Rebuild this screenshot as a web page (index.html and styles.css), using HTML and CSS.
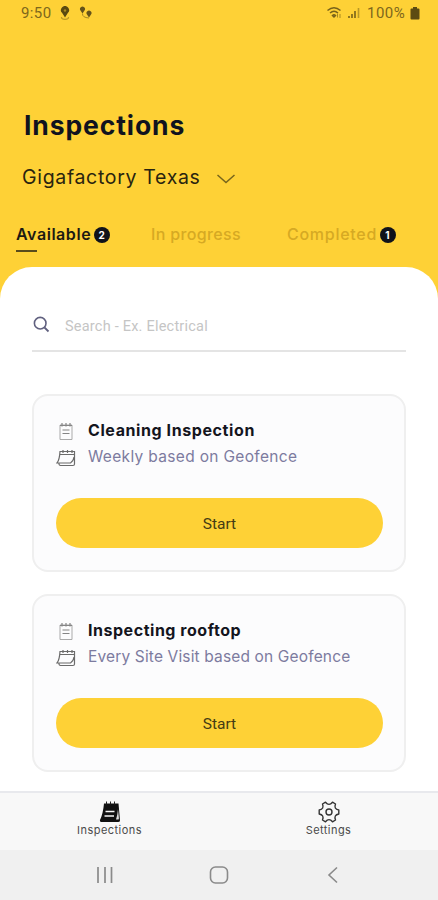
FILE: index.html
```html
<!DOCTYPE html>
<html lang="en">
<head>
<meta charset="utf-8">
<title>Inspections</title>
<link rel="stylesheet" href="styles.css">
</head>
<body>
<svg width="0" height="0" class="defs" aria-hidden="true">
  <symbol id="note" viewBox="0 0 18 20">
    <path d="M3 3h12v14.500H3z" fill="none" stroke="#aaa"/>
    <path d="M3 3.500h12M5 1v3.500M9 1v3.500M13 1v3.500M5.500 8h7M5.500 11.500h7" fill="none" stroke="currentColor" stroke-width="1.200"/>
  </symbol>
  <symbol id="calendar" viewBox="0 0 20 18">
    <path d="M4 2.500H18.500V15Q18.500 16.500 17 16.500H4.500Q3 16.500 2.800 14H1Q3.500 11 4 2.500zM4 5.500h14.500M7 1v3M11.500 1v3M16 1v3M2 14h12.500Q17.500 12 18 8" fill="none" stroke="currentColor" stroke-width="1.200"/>
  </symbol>
</svg>
<div class="phone">
  <header class="header">
    <div class="status">
      <span class="time">9:50</span>
      <svg class="pin" width="12" height="15" viewBox="0 0 12 15"><path d="M6 11.500L3.200 7A4 4 0 1 1 8.800 7z" fill="#5a4a10"/><circle cx="6" cy="4.500" r="1.200" fill="#a88a20"/><path d="M3 11Q1 13 6 13.300Q11 13 9 11" fill="none" stroke="#a88a20"/></svg>
      <svg class="route" width="14" height="14" viewBox="0 0 14 14"><path d="M3.500 7.500L1.500 4.500A2.500 2.500 0 1 1 5.500 4.500zM10 11.500L8 8.500A2.500 2.500 0 1 1 12 8.500z" fill="#65531a"/><path d="M3.500 7.500Q3 11.500 10 12" fill="none" stroke="#a88a20"/></svg>
      <span class="spacer"></span>
      <svg class="wifi" width="17" height="14" viewBox="0 0 17 14"><path d="M1.500 4.500Q8 -1 14.500 4.500M4 7Q8 3.500 12 7M6.500 9.500Q8 8 9.500 9.500L8 11z" fill="none" stroke="#77621a" stroke-width="1.500"/><path d="M11.500 7.500v4M14 8v4" stroke="#a88a20"/></svg>
      <svg class="signal" width="14" height="12" viewBox="0 0 14 12"><path d="M2 11V9M5 11V7M8 11V4" stroke="#77621a" stroke-width="1.600"/><path d="M11.500 11V1" stroke="#b89824" stroke-width="1.600"/></svg>
      <span class="percent">100%</span>
      <svg class="battery" width="10" height="13" viewBox="0 0 10 13"><path d="M3 0h4v1.500h1.500q1 0 1 1v9q0 1-1 1h-7q-1 0-1-1v-9q0-1 1-1H3z" fill="#5c4b12"/></svg>
    </div>
    <h1 class="title">Inspections</h1>
    <div class="location"><span>Gigafactory Texas</span><svg width="20" height="12" viewBox="0 0 20 12"><path d="M1.500 2L10 9.500L18.500 2" fill="none" stroke="#77651c" stroke-width="1.500"/></svg></div>
    <nav class="tabs">
      <div class="tab active"><span class="t-available">Available</span><b class="count">2</b></div>
      <div class="tab progress"><span class="t-progress">In progress</span></div>
      <div class="tab completed"><span class="t-completed">Completed</span><b class="count">1</b></div>
    </nav>
  </header>
  <main class="sheet">
    <div class="search"><svg width="17" height="17" viewBox="0 0 17 17"><circle cx="7.200" cy="7.200" r="5.800" fill="none" stroke="#60607f" stroke-width="1.600"/><path d="M11.500 11.500L15.500 15.500" stroke="#60607f" stroke-width="1.800"/></svg><span>Search - Ex. Electrical</span></div>
    <section class="card">
      <div class="row name"><svg class="note" width="18" height="20"><use href="#note"/></svg><span class="n-clean">Cleaning Inspection</span></div>
      <div class="row detail"><svg class="calendar" width="20" height="18"><use href="#calendar"/></svg><span class="d-weekly">Weekly based on Geofence</span></div>
      <button class="start">Start</button>
    </section>
    <section class="card">
      <div class="row name"><svg class="note" width="18" height="20"><use href="#note"/></svg><span class="n-roof">Inspecting rooftop</span></div>
      <div class="row detail"><svg class="calendar" width="20" height="18"><use href="#calendar"/></svg><span class="d-visit">Every Site Visit based on Geofence</span></div>
      <button class="start">Start</button>
    </section>
  </main>
  <nav class="bottom">
    <div class="item"><svg width="24" height="22" viewBox="0 0 24 22"><path d="M6 2.500H20.500L22 19.500Q22 21 20 21H4Q1.500 21 2 19Q5 13 6 2.500z" fill="#111"/><path d="M8.500 .5v3M12.500 .5v3M16.500 .5v3" stroke="#222"/><path d="M7.500 10.500h9M6.500 15h9.500" stroke="#f8f8f8" stroke-width="1.500"/><path d="M20 8Q19.500 14 18 18.500H20.300Q21 18.500 20.900 17z" fill="#ddd"/></svg><span>Inspections</span></div>
    <div class="item"><svg width="24" height="22" viewBox="0 0 24 22"><path d="M8.500 1.200Q12 5.500 15.500 1.200L18.500 3Q16.500 8 21.800 9V13Q16.500 14 18.500 19L15.500 20.800Q12 16.500 8.500 20.800L5.500 19Q7.500 14 2.200 13V9Q7.500 8 5.500 3z" fill="none" stroke="#333" stroke-width="1.400" stroke-linejoin="round"/><circle cx="12" cy="11" r="3" fill="none" stroke="#333" stroke-width="1.400"/></svg><span class="t-settings">Settings</span></div>
  </nav>
  <div class="system">
    <svg width="20" height="18" viewBox="0 0 20 18"><path d="M3 1v16M10 1v16M16.500 1v16" stroke="#8a8a8a" stroke-width="1.700"/></svg>
    <svg width="20" height="18" viewBox="0 0 20 18"><rect x="1.500" y="1" width="17" height="16" rx="5" fill="none" stroke="#8a8a8a" stroke-width="1.600"/></svg>
    <svg width="20" height="18" viewBox="0 0 20 18"><path d="M14 1.500L6 9L14 16.500" fill="none" stroke="#8a8a8a" stroke-width="1.600"/></svg>
  </div>
</div>
</body>
</html>
```
FILE: styles.css
```css
* { box-sizing: border-box; }
body { margin: 0; font-family: Inter, "Open Sans", sans-serif; background: #fed136; }
.defs { display: block; }
svg { flex: none; }
.phone { width: 438px; height: 900px; display: flex; flex-direction: column; overflow: hidden; background: #fed136; }
.header { height: 267px; }
.status { display: flex; align-items: center; height: 26px; padding: 0 18px 0 21px; font: 15px/26px Roboto, sans-serif; color: #7d671c; }
.time { width: 31px; letter-spacing: 0.400px; }
.pin { margin-left: 7px; }
.route { margin-left: 8px; }
.spacer { flex: 1; }
.signal { margin-left: 4px; }
.percent { width: 40px; margin: 0 3px 0 6px; letter-spacing: 0.500px; }
.title { margin: 81px 0 0 24px; font-size: 26.500px; line-height: 37px; font-weight: 700; letter-spacing: 0.900px; color: #10131f; }
.location { display: flex; align-items: center; height: 30px; margin: 18px 0 0 22px; font-size: 19.500px; letter-spacing: 0.680px; color: #29240f; }
.location svg { margin: 4px 0 0 15px; }
.tabs { display: flex; height: 36px; margin: 30px 0 0 16px; font-size: 16px; line-height: 25px; font-weight: 500; color: #d6a923; }
.tab { display: flex; align-items: center; height: 25px; white-space: nowrap; }
.t-available { letter-spacing: 0.550px; }
.t-progress { letter-spacing: 0.350px; }
.t-completed { letter-spacing: 0.720px; }
.active { width: 135px; color: #1c1a13; font-weight: 600; flex-wrap: wrap; align-content: flex-start; }
.active::after { content: ""; width: 21px; height: 2px; margin: 3px 114px 0 0; background: #594b1b; }
.progress { width: 136px; }
.count { width: 16px; height: 16px; margin: 1px 0 0 2.500px; border-radius: 50%; background: #10121a; color: #fff; font-size: 10px; line-height: 16px; text-align: center; font-weight: 700; }
.sheet { height: 524px; padding: 32px 32px 0; border-radius: 32px 32px 0 0; background: #fff; }
.search { display: flex; align-items: center; height: 53px; border-bottom: 2px solid #e4e4e4; font: 14.500px Roboto, sans-serif; letter-spacing: 0.220px; color: #c5c5c5; }
.search svg { margin: 0 15px 0 1px; }
.search span { padding-top: 3px; }
.card { height: 178px; margin: 42px 0 0; padding: 22px 21.500px 0 22px; border: 2px solid #efefef; border-radius: 16px; background: #fcfcfd; }
.card + .card { margin-top: 22px; }
.row { display: flex; align-items: center; height: 26px; white-space: nowrap; }
.row span { margin-top: -3px; }
.row.detail span { margin-top: -1px; }
.note { margin: 1px 13px 0 1px; color: #858585; }
.calendar { margin: 2px 12px 0 0; color: #6b6b6b; }
.name { font-size: 16px; font-weight: 700; color: #14151d; }
.n-clean { letter-spacing: 0.590px; }
.n-roof { letter-spacing: 0.530px; }
.detail { font-size: 15.500px; color: #7c7b9f; }
.d-weekly { letter-spacing: 0.330px; }
.d-visit { letter-spacing: 0.150px; }
.start { display: block; width: 327px; height: 50px; margin: 28px 0 0; padding: 2px 0 0; border: 0; border-radius: 25px; background: #fed136; font: 15.500px Roboto, sans-serif; color: #463b14; }
.bottom { display: flex; height: 59px; border-top: 2px solid #e8e9ed; background: #f8f8f8; }
.item { flex: 1; display: flex; flex-direction: column; align-items: center; padding-top: 8px; font-size: 11px; line-height: 15px; letter-spacing: 0.450px; color: #4a4a4a; }
.item svg { display: block; }
.system { display: flex; justify-content: space-between; align-items: center; height: 50px; padding: 0 95px; background: #f0f0f0; }
```
